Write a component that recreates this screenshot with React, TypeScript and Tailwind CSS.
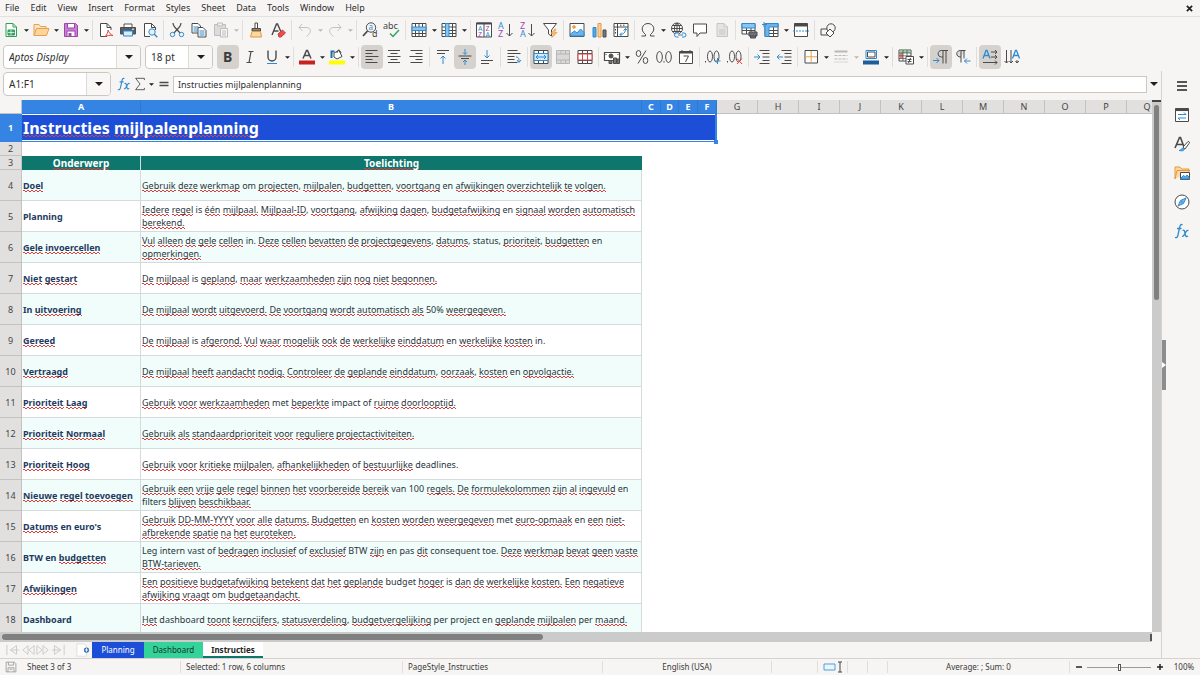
import React, { useState } from "react";

const menus = ["File", "Edit", "View", "Insert", "Format", "Styles", "Sheet", "Data", "Tools", "Window", "Help"];

const columns = [
  { name: "A", width: "w-[119px]", selected: true },
  { name: "B", width: "w-[501px]", selected: true },
  { name: "C", width: "w-[19px]", selected: true },
  { name: "D", width: "w-[18px]", selected: true },
  { name: "E", width: "w-[19px]", selected: true },
  { name: "F", width: "w-[19px]", selected: true },
  ...["G", "H", "I", "J", "K", "L", "M", "N", "O", "P", "Q"].map((name) => ({
    name,
    width: "w-[41px]",
    selected: false,
  })),
];

const rows = [
  ["Doel", "Gebruik deze werkmap om projecten, mijlpalen, budgetten, voortgang en afwijkingen overzichtelijk te volgen."],
  ["Planning", "Iedere regel is één mijlpaal. Mijlpaal-ID, voortgang, afwijking dagen, budgetafwijking en signaal worden automatisch berekend."],
  ["Gele invoercellen", "Vul alleen de gele cellen in. Deze cellen bevatten de projectgegevens, datums, status, prioriteit, budgetten en opmerkingen."],
  ["Niet gestart", "De mijlpaal is gepland, maar werkzaamheden zijn nog niet begonnen."],
  ["In uitvoering", "De mijlpaal wordt uitgevoerd. De voortgang wordt automatisch als 50% weergegeven."],
  ["Gereed", "De mijlpaal is afgerond. Vul waar mogelijk ook de werkelijke einddatum en werkelijke kosten in."],
  ["Vertraagd", "De mijlpaal heeft aandacht nodig. Controleer de geplande einddatum, oorzaak, kosten en opvolgactie."],
  ["Prioriteit Laag", "Gebruik voor werkzaamheden met beperkte impact of ruime doorlooptijd."],
  ["Prioriteit Normaal", "Gebruik als standaardprioriteit voor reguliere projectactiviteiten."],
  ["Prioriteit Hoog", "Gebruik voor kritieke mijlpalen, afhankelijkheden of bestuurlijke deadlines."],
  ["Nieuwe regel toevoegen", "Gebruik een vrije gele regel binnen het voorbereide bereik van 100 regels. De formulekolommen zijn al ingevuld en filters blijven beschikbaar."],
  ["Datums en euro's", "Gebruik DD-MM-YYYY voor alle datums. Budgetten en kosten worden weergegeven met euro-opmaak en een niet-afbrekende spatie na het euroteken."],
  ["BTW en budgetten", "Leg intern vast of bedragen inclusief of exclusief BTW zijn en pas dit consequent toe. Deze werkmap bevat geen vaste BTW-tarieven."],
  ["Afwijkingen", "Een positieve budgetafwijking betekent dat het geplande budget hoger is dan de werkelijke kosten. Een negatieve afwijking vraagt om budgetaandacht."],
  ["Dashboard", "Het dashboard toont kerncijfers, statusverdeling, budgetvergelijking per project en geplande mijlpalen per maand."],
];

// words the (English) spell checker accepts
const known = new Set(
  "om en is in status met impact of deadlines van 100 50% filters leg intern vast btw pas consequent toe dashboard per project budget planning euro's".split(" ")
);

// two rows of red dashes, shifted by half a period, make the zigzag
const zigzag =
  "bg-[linear-gradient(90deg,#e03c3c_50%,transparent_50%),linear-gradient(90deg,transparent_50%,#e03c3c_50%)] bg-[length:4px_1px] bg-repeat-x";

const Spelled = ({ text, big }: { text: string; big?: boolean }) => (
  <>
    {text.split(" ").map((word, i) => {
      const comma = word.endsWith(",");
      const body = comma ? word.slice(0, -1) : word;
      const ok = known.has(body.replace(/\.$/, "").toLowerCase());
      return (
        <React.Fragment key={i}>
          {i > 0 && " "}
          {ok ? (
            body
          ) : (
            <span
              className={`${zigzag} ${
                big
                  ? "[background-position:0_calc(100%-3px),0_calc(100%-2px)]"
                  : "[background-position:0_calc(100%-1px),0_100%]"
              }`}
            >
              {body}
            </span>
          )}
          {comma && ","}
        </React.Fragment>
      );
    })}
  </>
);

const Svg = ({ children, size = "size-4" }: { children: React.ReactNode; size?: string }) => (
  <svg viewBox="0 0 16 16" className={`${size} shrink-0 overflow-visible`} fill="none" stroke="#4a4a4a" strokeWidth="1" aria-hidden="true">
    {children}
  </svg>
);

const blue = "#2f8bd0";

const icons: Record<string, React.ReactNode> = {
  new: (
    <>
      <path d="M3 1.500h7l3.500 3.500V14.500H3z" fill="#fff" stroke="#2f9e58" />
      <path d="M10 1.500v3.500h3.500" stroke="#2f9e58" />
      <path d="M5 8h6.500v5H5z" fill="#36a862" stroke="#2f9e58" />
      <path d="M5 10.500h6.500M8 8v5" stroke="#fff" strokeWidth=".7" />
    </>
  ),
  open: (
    <>
      <path d="M1 13.500V2.500h5l1.500 2H13v2" fill="#fbe3c4" stroke="#e8a04a" />
      <path d="M1 13.500 3.500 6.500H16l-2.500 7z" fill="#fcd49c" stroke="#e8a04a" />
    </>
  ),
  save: (
    <>
      <path d="M1.500 1.500h11l2 2v11h-13z" fill="#c77fd3" stroke="#9b48ab" />
      <path d="M4.500 1.500h7v4.500h-7z" fill="#fff" stroke="#9b48ab" />
      <path d="M4 9h8v5.500H4z" fill="#fff" stroke="#9b48ab" />
      <path d="M5.500 11h3v3.500h-3z" fill="#9b48ab" stroke="none" />
    </>
  ),
  pdf: (
    <>
      <path d="M9 14.500H2.500v-13h6.500l4 4V8" fill="#fff" />
      <path d="M9 1.500v4h4" />
      <path d="M7 14.500c2-1.500 3-4.500 3-6.500 1 3 3 5 5 5.500-3-.5-6 0-8 1z" stroke="#e04444" />
    </>
  ),
  print: (
    <>
      <path d="M4 5V2h8v3" stroke="#555" fill="#fff" />
      <path d="M.5 5.500h15v6.500H.500z" fill="#56606a" stroke="#4a4f55" />
      <path d="M3.500 9h9v5h-9z" fill="#d9ecfa" stroke={blue} />
      <path d="M12 7.200h2" stroke="#fff" />
    </>
  ),
  preview: (
    <>
      <path d="M8 14.500H2.500v-13h7l4 4V8" fill="#fff" />
      <path d="M9.500 1.500v4h4" />
      <circle cx="10" cy="10" r="3.200" fill="#e2f1fc" stroke={blue} />
      <path d="m12.300 12.300 3 3" stroke={blue} strokeWidth="1.400" />
    </>
  ),
  cut: (
    <>
      <path d="M4 1c0 4 4 6 7 10M12 1c0 4-4 6-7 10" strokeWidth="1.200" />
      <circle cx="3.500" cy="12.500" r="2.200" stroke={blue} />
      <circle cx="12.500" cy="12.500" r="2.200" stroke={blue} />
    </>
  ),
  copy: (
    <>
      <path d="M1 1.500h6l2.500 2.500v7H1z" fill="#fff" />
      <path d="M2.500 5h5M2.500 7h4M2.500 9h4" stroke={blue} />
      <path d="M7 5.500h5l3 3v6.500H7z" fill="#fff" />
      <path d="M8.500 9h5M8.500 11h5M8.500 13h5" stroke={blue} />
    </>
  ),
  paste: (
    <g stroke="#bdbdbd">
      <path d="M7 13.500H1.500v-11h11V6" fill="#dcdcdc" />
      <path d="M4.500 1h5v3h-5z" fill="#eee" />
      <path d="M7.500 6.500h7v8.500h-7zM9 9h4M9 11h4M9 13h4" fill="#f7f7f7" />
    </g>
  ),
  clone: (
    <>
      <path d="M7 1h2.500v5.500H7z" fill="#fff" />
      <path d="M4 6.500h8.500V9H4z" fill="#888" />
      <path d="M4 9.500h8.500l1 5.500h-11z" fill="#fbd7a4" stroke="#e9973a" />
    </>
  ),
  clear: (
    <>
      <path d="M2 13 6.500 2h1L11 10M3.500 9h5" strokeWidth="1.400" />
      <path d="m8 12 4.500-4 3 3L11 15H9z" fill="#e35050" stroke="#d23c3c" />
    </>
  ),
  undo: <path d="M5 2 2 5.500 5.500 9M2 5.500h7c6 0 5.500 5.500.500 9" stroke="#c2c2c2" />,
  redo: <path d="m11 2 3 3.500L10.500 9M14 5.500H7c-6 0-5.500 5.500-.5 9" stroke="#c2c2c2" />,
  find: (
    <>
      <circle cx="9" cy="5.500" r="4.700" />
      <path d="M5.500 9 1 14" strokeWidth="1.800" />
      <text x="6.500" y="8" fontSize="8" fill={blue} stroke="none">a</text>
      <text x="10" y="15" fontSize="9" fill="#444" stroke="none">d</text>
    </>
  ),
  spell: (
    <>
      <text x="-1" y="7" fontSize="9" fill="#444" stroke="none">abc</text>
      <path d="m6 11.500 3 3L15 8" stroke="#2fa55f" strokeWidth="1.500" />
    </>
  ),
  row: (
    <>
      <path d="M1 1.500h14v13H1zM1 11.500h14M4.500 1.500v13M8 1.500v13M11.500 1.500v13" fill="#fff" />
      <path d="M1 5h14v3.500H1z" fill="#8cc4f0" stroke={blue} />
    </>
  ),
  col: (
    <>
      <path d="M1 1.500h14v13H1zM1 5h14M1 8.500h14M1 11.500h14M11.500 1.500v13" fill="#fff" />
      <path d="M4.500 1.500H8v13H4.500z" fill="#8cc4f0" stroke={blue} />
    </>
  ),
  sort: (
    <>
      <path d="M.5 1h15v14H.500zM8 1v14" fill="#fff" />
      <path d="M.5 1.500h15" strokeWidth="2" />
      <g fontSize="7" stroke="none">
        <text x="2" y="8.500" fill={blue}>A</text>
        <text x="2" y="14.500" fill="#a344b5">Z</text>
        <text x="9.500" y="8.500" fill="#a344b5">Z</text>
        <text x="9.500" y="14.500" fill={blue}>A</text>
      </g>
    </>
  ),
  asc: (
    <>
      <g fontSize="9" stroke="none">
        <text x="0" y="7" fill={blue}>A</text>
        <text x="0" y="15" fill="#a344b5">Z</text>
      </g>
      <path d="M11.500 2v12M8.500 11l3 3 3-3" />
    </>
  ),
  desc: (
    <>
      <g fontSize="9" stroke="none">
        <text x="0" y="7" fill="#a344b5">Z</text>
        <text x="0" y="15" fill={blue}>A</text>
      </g>
      <path d="M11.500 2v12M8.500 11l3 3 3-3" />
    </>
  ),
  filter: (
    <>
      <path d="M1.500 1.500h13L9.500 8v6L6.500 12V8z" fill="#fff" />
      <path d="m13 7-4 4.500h2.500L10 15.500l5-5h-2.500l1.500-3.500z" fill="#fbc27c" stroke="#e9973a" strokeWidth=".7" />
    </>
  ),
  image: (
    <>
      <path d="M1 1.500h14v13H1z" fill="#fff" />
      <circle cx="5" cy="5" r="1.300" fill="#f5a94d" stroke="#e9973a" />
      <path d="m1.500 12 4-3 2.500 2 3.500-4 3.500 3.500V14H1.500z" fill="#6db3ea" stroke={blue} />
    </>
  ),
  chart: (
    <>
      <path d="M2 5.500h3v9.500H2z" fill="#58a6e0" stroke={blue} />
      <path d="M7 1.500h3V15H7z" fill="#fbd09a" stroke="#e9973a" />
      <path d="M12 8h3v7h-3z" fill="#777" />
    </>
  ),
  pivot: (
    <>
      <path d="M1 1.500h14v13H1zM1 5h14M4.500 1.500v13M7 3.200h1.500M10 3.200h1.500M2.500 7v1.500M2.500 10v1.500" fill="#fff" />
      <path d="M12.500 6.500c0 4-2 6-5.500 6M10.500 8.500l2-2 2 2M9 10.500l-2 2 2 2" stroke={blue} />
    </>
  ),
  omega: <path d="M1.500 14h4v-1.500C-.5 8 2.500 1.500 8 1.500s8.500 6.500 2.500 11V14h4" />,
  link: (
    <>
      <circle cx="7" cy="6.500" r="5.500" fill="#fff" />
      <path d="M1.500 6.500h11M7 1v11M7 1c-3.500 3.500-3.500 7.500 0 11M7 1c3.500 3.500 3.500 7.500 0 11M2.500 3.500h9M2.500 9.500h9" />
      <path d="M8.500 11h-2a2 2 0 0 0 0 4h2M12 11h2a2 2 0 0 1 0 4h-2M8 13h5" stroke={blue} fill="#f6f5f4" />
    </>
  ),
  comment: <path d="M1.500 2h13v9H8l-3 3.500V11H1.500z" fill="#fff" />,
  note: <path d="M3 1.500h7l3.500 3.500v9.500H3zM10 1.500v3.500h3.500M5 8h6.500M5 10h6.500M5 12h6.500" stroke="#c6c6c6" fill="#e4e4e4" />,
  printArea: (
    <>
      <path d="M1 1.500h13V12H1zM1 8.500h13M5.500 1.500V12M10 1.500V12" fill="#fff" />
      <path d="M1 1.500h13V6H1z" fill="#8cc4f0" stroke={blue} />
      <path d="M8 10h8v4H8zM9.500 14v2h5v-2" fill="#6a7178" />
    </>
  ),
  freeze: (
    <>
      <path d="M2 1.500h13v13H2zM2 8.500h13M2 11.500h13M10.500 1.500v13" fill="#fff" />
      <path d="M2 1.500h13V5H6v9.500H2z" fill="#6db3ea" stroke={blue} />
      <path d="M1 0v5M-1 2.500h5" stroke={blue} />
    </>
  ),
  split: (
    <>
      <path d="M1.500 1.500h13v13h-13z" fill="#fff" />
      <path d="M1.500 3h13" strokeWidth="3" />
      <path d="M0 9h16" stroke={blue} strokeDasharray="2 1" />
    </>
  ),
  shapes: (
    <>
      <path d="M1 7h8v6H1z" />
      <circle cx="11" cy="6" r="4.200" fill="#f6f5f4" />
      <path d="m10 7 4 4-4 4-4-4z" fill="#fff" />
    </>
  ),
  bold: <text x="3" y="13" fontSize="14" fontWeight="700" fill="#3d3d3d" stroke="none">B</text>,
  italic: <path d="M6.500 2.500h5M4.500 13.500h5M9 2.500l-2 11" strokeWidth="1.200" />,
  underline: (
    <>
      <path d="M4 1.500V8a4 4 0 0 0 8 0V1.500" strokeWidth="1.400" />
      <path d="M3 14.500h10" stroke={blue} />
    </>
  ),
  color: (
    <>
      <path d="m4 9.500 3.500-8h1l3.500 8M5.500 6.500h5" strokeWidth="1.500" />
      <path d="M0 11.500h16v4H0z" fill="#c9211e" stroke="none" />
    </>
  ),
  fill: (
    <>
      <path d="m5 4 5-2.500 3 6L8 10 5 8z" fill="#fff" />
      <path d="M8 4c0-4 3-4 4 0" />
      <path d="M2.500 9V2.500h3" stroke="#1f6fb0" strokeWidth="2" />
      <path d="M0 11.500h16v4H0z" fill="#ffff00" stroke="none" />
    </>
  ),
  left: <path d="M1.500 1.500h12M1.500 4.500h7M1.500 7.500h13M1.500 10.500h7M1.500 13.500h12" />,
  center: <path d="M2 1.500h12M4.500 4.500h7M1.500 7.500h13M4.500 10.500h7M2 13.500h12" />,
  right: <path d="M2.500 1.500h12M7.500 4.500h7M1.500 7.500h13M7.500 10.500h7M2.500 13.500h12" />,
  top: (
    <>
      <path d="M2 1.500h12M2 4.500h8" />
      <path d="M8 15V7M5.500 9.500 8 7l2.500 2.500" stroke={blue} />
    </>
  ),
  middle: (
    <>
      <path d="M1.500 7h13M4 9.500h8" />
      <path d="M8 0v5M6 3.500 8 5.500l2-2M8 16v-4.500M6 13l2-2 2 2" stroke={blue} />
    </>
  ),
  bottom: (
    <>
      <path d="M2 11.500h12M2 14.500h8" />
      <path d="M8 1v8M5.500 6.500 8 9l2.500-2.500" stroke={blue} />
    </>
  ),
  wrap: (
    <>
      <path d="M1.500 1.500h10M1.500 4.500h13M1.500 7.500h7M1.500 10.500h7M1.500 13.500h10" />
      <path d="M10 8c3 0 3 2 3 5M11 11l2 2.500L15 11" stroke={blue} />
    </>
  ),
  merge: (
    <>
      <path d="M1 1.500h14v13H1zM1 4.500h14M1 11.500h14M5.500 1.500v3M10.500 1.500v3M5.500 11.500v3M10.500 11.500v3" fill="#fff" />
      <path d="M1 4.500h14v7H1z" fill="#d4e9fa" stroke={blue} />
      <path d="M3 8h10M5 6 3 8l2 2M11 6l2 2-2 2" stroke={blue} />
    </>
  ),
  mergeGrey: <path d="M1.500 1.500h13v13h-13zM1.500 5h13M1.500 11h13M6 1.500v3.500M10.500 1.500v3.500M6 11v3.500M10.500 11v3.500" stroke="#b5b5b5" fill="#d9d9d9" />,
  splitCells: (
    <>
      <path d="M1 1.500h14v13H1zM1 4.500h14M1 11.500h14M5.500 1.500v3M10.500 1.500v3M5.500 11.500v3M10.500 11.500v3" fill="#fff" />
      <path d="M1 5h14v6H1zM5.500 5v6M10.500 5v6" stroke="#dd4444" fill="#fff" />
    </>
  ),
  currency: (
    <>
      <path d="M.5 3.500h15v8H.500z" fill="#fff" strokeWidth="1.200" />
      <circle cx="7" cy="7" r="2" fill="#555" />
      <path d="M2 5v1M14 5v1M5 14.500v-3h3v3zM9.500 14.500V9h3v5.500zM13 14.500V10h2.500v4.500z" fill="#777" />
    </>
  ),
  percent: (
    <>
      <ellipse cx="4.500" cy="4.500" rx="2.300" ry="3" />
      <ellipse cx="11.500" cy="11.500" rx="2.300" ry="3" />
      <path d="m12 1.500-8 13" />
    </>
  ),
  number: (
    <>
      <ellipse cx="3.500" cy="8" rx="2.800" ry="5.500" />
      <ellipse cx="12.500" cy="8" rx="2.800" ry="5.500" />
      <path d="M8 12v1.500" />
    </>
  ),
  date: (
    <>
      <path d="M1.500 2.500h13v12h-13z" fill="#fff" />
      <path d="M1.500 3.500h13" strokeWidth="2" />
      <path d="M4 1v2M12 1v2M5.500 7h5l-3 6" />
    </>
  ),
  addDec: (
    <>
      <path d="M.5 12v1.500" />
      <ellipse cx="5" cy="7.500" rx="2.500" ry="5.500" />
      <ellipse cx="11.500" cy="7.500" rx="2.500" ry="5.500" />
      <path d="M12.500 9v6M9.500 12h6" stroke={blue} />
    </>
  ),
  delDec: (
    <>
      <path d="M.5 12v1.500" />
      <ellipse cx="5" cy="7.500" rx="2.500" ry="5.500" />
      <ellipse cx="11.500" cy="7.500" rx="2.500" ry="5.500" />
      <path d="m10 9.500 5 5.500m0-5.500L10 15" stroke="#e04444" />
    </>
  ),
  indent: (
    <>
      <path d="M5.500 1.500h10M8.500 4.500h7M8.500 8h7M8.500 11.500h7M5.500 14.500h10" />
      <path d="M0 8h6M3.500 5.500 6 8l-2.500 2.500" stroke={blue} />
    </>
  ),
  outdent: (
    <>
      <path d="M5.500 1.500h10M8.500 4.500h7M8.500 8h7M8.500 11.500h7M5.500 14.500h10" />
      <path d="M7 8H1M3.500 5.500 1 8l2.500 2.500" stroke={blue} />
    </>
  ),
  border: (
    <>
      <path d="M2 1.500h12.500v12.500H2z" fill="#fff" />
      <path d="M8.200 2v11.500M2.500 7.800h11.500" stroke="#e9a04a" />
    </>
  ),
  lines: (
    <g stroke="#b9b9b9">
      <path d="M1.500 2.500h13" strokeWidth="2" />
      <path d="M1.500 6.500h13M1.500 10h13" strokeDasharray="3 1" />
      <path d="M1.500 13h13" strokeDasharray="1 1" />
    </g>
  ),
  borderColor: (
    <>
      <path d="M3 1.500h10.500v8H3z" fill="#fff" stroke={blue} />
      <path d="M4.500 3h7.500v5H4.500z" />
      <path d="M0 11.500h16v4H0z" fill="#1f5d9a" stroke="none" />
    </>
  ),
  cond: (
    <>
      <path d="M1 1h12v11H1z" fill="#fff" />
      <path d="M1.500 1.500h11v2.500h-11z" fill="#8fd29c" stroke="none" />
      <path d="M1.500 4h3.500v5.500H1.500z" fill="#ee8080" stroke="none" />
      <path d="M5 1v11M9 1v11M1 4h12M1 6.800h12M1 9.500h12" strokeWidth=".7" />
      <path d="M8 7.500h7.500V15H8zM9.500 10.500h4M9.500 12.500h4M12.500 9l-2 5" fill="#fff" />
    </>
  ),
  ltr: (
    <>
      <path d="M10 1.500v13M13 1.500v13M15 1.500H8.500C4 1.500 4 8 8.500 8H10" />
      <path d="M0 11.500h6M3.500 9 6 11.500 3.500 14" stroke={blue} />
    </>
  ),
  rtl: (
    <>
      <path d="M6 1.500v12M9 1.500v8M10.500 1.500h-5c-5 0-5 6.500 0 6.500H6" fill="#ddd" />
      <path d="M15.500 12h-6M12 9.500 9.500 12l2.500 2.500" stroke={blue} />
    </>
  ),
  textH: (
    <>
      <path d="m1 9.500 3-8h1l3 8M2.500 6.500h4" stroke={blue} strokeWidth="1.300" />
      <path d="M9 3h6M13 1l2 2-2 2M9 8h6M13 6l2 2-2 2M1 13.500h14M13 11.500l2 2-2 2" />
    </>
  ),
  textV: (
    <>
      <path d="m8.500 9.500 3-8h1l3 8M10 6.500h4" stroke={blue} strokeWidth="1.300" />
      <path d="M2.500 1v13M.5 12l2 2 2-2M7 1v13M5.500 12 7 14l2-2M13 11v3M11.500 12l1.500 2 2-2" />
    </>
  ),
  props: (
    <>
      <path d="M1.500 1.500h13v13h-13z" fill="#fff" />
      <path d="M1.500 2.800h13" strokeWidth="2.500" />
      <path d="M4 7.500h8M10 5.500l2 2M4 11h8M6 13l-2-2" stroke={blue} />
    </>
  ),
  style: (
    <>
      <path d="m1 12 4.500-10.500h1L10 11M2.500 8.500h6" strokeWidth="1.600" />
      <path d="m9 11 5-5.500c1.500 0 2 1 1 2L11 13z" fill="#fff" />
      <path d="M5 14.500c3 0 2-3 5-2.500 1.500 2-1 3.500-5 2.500z" fill="#5aa9e6" stroke={blue} />
    </>
  ),
  gallery: (
    <>
      <path d="M1 14V2h5l1.500 2H15v3" fill="#fcd9a8" stroke="#e9973a" />
      <path d="M1 14 3 5.500h13" stroke="#e9973a" />
      <path d="M6.500 7.500h9v7h-9z" fill="#fff" />
      <path d="m7 13 2.500-2.500 2 1.500L13 10l2 2v2H7z" fill="#5aa9e6" stroke={blue} />
    </>
  ),
  navigator: (
    <>
      <circle cx="8" cy="8" r="7" fill="#fff" />
      <path d="m12 4-2.500 5.500L4 12l2.500-5.500z" fill="#7dbcf0" stroke={blue} />
      <circle cx="8" cy="8" r="1" fill="#fff" stroke={blue} />
    </>
  ),
  fx: (
    <g stroke={blue} strokeWidth="1.300">
      <path d="M8.500 1.800C6.500.8 6 2.500 5.500 5L4 12c-.5 2.500-1.500 3-3 2.300M3 5.500h4.500" />
      <path d="M8.500 7.500c2-1 2 .5 2.500 3s1 4 3 2.500M14.500 7.500c-2-1-2.500 1.500-3.500 3s-1.500 3.500-3 2.800" />
    </g>
  ),
  sum: <path d="M13 3.500v-2H3l5 6.500-5 6.500h10v-2" />,
  floppy: <path d="M1.500 1.500h11l2 2v11h-13zM4.500 1.500v4h7v-4M4 14.500V9h8v5.500M6 11h4" stroke="#909090" />,
};

type Item = { id: string; drop?: boolean; on?: boolean; off?: boolean };

const SEP: Item = { id: "sep" };

const standardBar: Item[] = [
  { id: "new", drop: true }, { id: "open", drop: true }, { id: "save", drop: true }, SEP,
  { id: "pdf" }, { id: "print" }, { id: "preview" }, SEP,
  { id: "cut" }, { id: "copy" }, { id: "paste", drop: true, off: true }, SEP,
  { id: "clone" }, { id: "clear" }, SEP,
  { id: "undo", drop: true, off: true }, { id: "redo", drop: true, off: true }, SEP,
  { id: "find" }, { id: "spell" }, SEP,
  { id: "row", drop: true }, { id: "col", drop: true }, SEP,
  { id: "sort" }, { id: "asc" }, { id: "desc" }, { id: "filter" }, SEP,
  { id: "image" }, { id: "chart" }, { id: "pivot" }, SEP,
  { id: "omega", drop: true }, { id: "link" }, { id: "comment" }, { id: "note", off: true }, SEP,
  { id: "printArea" }, { id: "freeze", drop: true }, { id: "split" }, SEP,
  { id: "shapes" },
];

const formatBar: Item[] = [
  { id: "bold", on: true }, { id: "italic" }, { id: "underline", drop: true }, SEP,
  { id: "color", drop: true }, { id: "fill", drop: true }, SEP,
  { id: "left", on: true }, { id: "center" }, { id: "right" }, SEP,
  { id: "top" }, { id: "middle", on: true }, { id: "bottom" }, SEP,
  { id: "wrap" }, SEP,
  { id: "merge", on: true }, { id: "mergeGrey", off: true }, { id: "splitCells" }, SEP,
  { id: "currency", drop: true }, { id: "percent" }, { id: "number" }, { id: "date" }, SEP,
  { id: "addDec" }, { id: "delDec" }, SEP,
  { id: "indent" }, { id: "outdent" }, SEP,
  { id: "border", drop: true }, { id: "lines", drop: true, off: true }, { id: "borderColor", drop: true }, SEP,
  { id: "cond", drop: true }, SEP,
  { id: "ltr", on: true }, { id: "rtl" }, SEP,
  { id: "textH", on: true }, { id: "textV" },
];

const Caret = ({ off, big }: { off?: boolean; big?: boolean }) => (
  <svg viewBox="0 0 8 4" className={big ? "w-2 h-1" : "w-[5px] h-[3px]"} fill={off ? "#b8b8b8" : "#1f1f1f"} aria-hidden="true">
    <path d="M0 0h8L4 4z" />
  </svg>
);

const Bar = ({ items }: { items: Item[] }) => (
  <div className="flex items-center" role="toolbar">
    {items.map((item, i) =>
      item.id === "sep" ? (
        <div key={i} className="w-[5px] h-5 flex justify-center shrink-0">
          <div className="w-px bg-[#e0dedb]"></div>
        </div>
      ) : (
        <React.Fragment key={i}>
          <button
            type="button"
            aria-label={item.id}
            className={`w-[22px] h-6 rounded flex items-center justify-center shrink-0 ${item.on ? "bg-[#d5d1cd]" : ""}`}
          >
            <Svg>{icons[item.id]}</Svg>
          </button>
          {item.drop && (
            <button type="button" aria-label={item.id + " options"} className="w-2 h-6 flex items-center justify-center shrink-0">
              <Caret off={item.off} />
            </button>
          )}
        </React.Fragment>
      )
    )}
  </div>
);

const Combo = ({ label, value, className }: { label: string; value: string; className: string }) => {
  const [text, setText] = useState(value);
  return (
    <div className={`flex h-6 rounded border border-[#cdc7c2] bg-white overflow-hidden shrink-0 ${className}`}>
      <input
        aria-label={label}
        value={text}
        onChange={(e) => setText(e.target.value)}
        className="flex-1 min-w-0 px-[5px] outline-none"
      />
      <button type="button" aria-label={label + " list"} className="w-6 border-l border-[#dedad7] bg-[#f8f7f6] flex items-center justify-center">
        <Caret big />
      </button>
    </div>
  );
};

const RowHead = ({ n, selected }: { n: number; selected?: boolean }) => (
  <th
    scope="row"
    className={`border-r border-b text-center p-0 text-[9px] ${
      selected ? "bg-[#3584e4] border-[#3584e4] text-white font-bold" : "bg-[#e2e0de] border-[#c4c2c0] font-normal text-[#444]"
    }`}
  >
    {n}
  </th>
);

const Sheet = () => (
  <div className="flex-1 min-w-0 overflow-hidden bg-white">
    <table className="table-fixed border-separate border-spacing-0 w-[1168px] text-[9px] leading-[13px] text-[#2b3640]">
      <colgroup>
        <col className="w-[22px]" />
        {columns.map((c) => (
          <col key={c.name} className={c.width} />
        ))}
      </colgroup>
      <thead>
        <tr className="h-[14px]">
          <td className="bg-[#f6f5f4] border-r border-b border-[#c4c2c0] p-0"></td>
          {columns.map((c) => (
            <th
              key={c.name}
              scope="col"
              className={`p-0 border-r border-b ${
                c.selected ? "bg-[#3584e4] border-[#2f78d0] text-white font-bold" : "bg-[#e2e0de] border-[#c4c2c0] text-[#444] font-normal"
              }`}
            >
              {c.name}
            </th>
          ))}
        </tr>
      </thead>
      <tbody>
        <tr className="h-7">
          <RowHead n={1} selected />
          <td colSpan={6} className="relative py-0 pl-px pr-0 bg-[#1d4ed8] border-b border-r-2 border-[#3584e4] text-white text-[16px] leading-6 font-bold whitespace-nowrap shadow-[inset_0_-1px_0_#fff,inset_0_1px_0_#fff]">
            <Spelled text="Instructies mijlpalenplanning" big />
            <span className="absolute -right-[3px] -bottom-[3px] size-1 bg-[#3584e4]"></span>
          </td>
        </tr>
        <tr className="h-[14px]">
          <RowHead n={2} />
        </tr>
        <tr className="h-[14px] text-white font-bold text-[10px]">
          <RowHead n={3} />
          <td className="p-0 bg-[#0f766e] border-r border-[#d5dadd] text-center">
            <Spelled text="Onderwerp" />
          </td>
          <td className="p-0 bg-[#0f766e] text-center">
            <Spelled text="Toelichting" />
          </td>
        </tr>
        {rows.map(([topic, note], i) => (
          <tr key={topic} className="h-[31px]">
            <RowHead n={i + 4} />
            <td className={`py-0 pl-px pr-0 border-r border-b border-[#d5dadd] font-bold text-[#1e3a5f] whitespace-nowrap ${i % 2 === 0 ? "bg-[#f0fdfa]" : ""}`}>
              <Spelled text={topic} />
            </td>
            <td className={`py-0 pl-px pr-0 border-r border-b border-[#d5dadd] ${i % 2 === 0 ? "bg-[#f0fdfa]" : ""}`}>
              <Spelled text={note} />
            </td>
          </tr>
        ))}
      </tbody>
    </table>
  </div>
);

const SheetTabs = () => (
  <div className="flex items-stretch h-4 shrink-0 text-[9px] leading-4">
    <div className="flex items-center pl-[5px] w-[74px]">
      {["M1 2v12M12 3 5 8l7 5zM5 8h10", "M8 3 2 8l6 5zM15 3 9 8l6 5z", "M1 3l6 5-6 5zM8 3l6 5-6 5z", "M15 2v12M4 3l7 5-7 5zM1 8h10"].map((d) => (
        <button key={d} type="button" aria-label="Scroll sheets" className="w-[15px] flex justify-center">
          <svg viewBox="0 0 16 16" className="size-[14px]" fill="none" stroke="#c9c7c5" aria-hidden="true">
            <path d={d} />
          </svg>
        </button>
      ))}
    </div>
    <button type="button" aria-label="Add sheet" className="w-[18px] flex items-center justify-center">
      <svg viewBox="0 0 16 16" className="size-[14px]" aria-hidden="true">
        <path d="M1 1h8l3 3v11H1z" fill="#fff" stroke="#dcdcdc" />
        <circle cx="12" cy="8" r="3" fill="#2f6fb0" />
        <path d="M12 6v4M10 8h4" stroke="#fff" />
      </svg>
    </button>
    <button type="button" className="w-[52px] bg-[#1d4ed8] text-white text-[8px]">Planning</button>
    <button type="button" className="w-[59px] bg-[#34d399] text-[#17352b] text-[8px]">Dashboard</button>
    <button type="button" className="w-[60px] bg-white border-b-2 border-[#0f766e] text-[#222] font-bold text-[8px]">Instructies</button>
  </div>
);

const StatusBar = () => (
  <footer className="flex items-center h-[17px] border-t border-[#d5d2cf] text-[8px] text-[#3a3a3a] shrink-0">
    <div className="w-[22px] flex justify-center">
      <Svg size="size-3">{icons.floppy}</Svg>
    </div>
    <div className="w-[158px] pl-[5px]">Sheet 3 of 3</div>
    <div className="w-[222px] pl-[5px] border-l border-[#e0dedb]">Selected: 1 row, 6 columns</div>
    <div className="w-[200px] pl-[5px] border-l border-[#e0dedb]">PageStyle_Instructies</div>
    <div className="w-[169px] text-center border-l border-[#e0dedb]">English (USA)</div>
    <div className="w-[46px] border-l border-[#e0dedb] h-3"></div>
    <div className="w-[30px] border-l border-[#e0dedb] flex items-center justify-center">
      <svg viewBox="0 0 20 12" className="w-5 h-3" fill="none" aria-hidden="true">
        <path d="M1 3h11v6H1z" stroke="#4f9fd8" fill="#eaf5fd" />
        <path d="M15 1h4M15 11h4M17 1v10" stroke="#444" />
      </svg>
    </div>
    <div className="w-5 border-l border-[#e0dedb] h-3"></div>
    <div className="w-5 border-l border-[#e0dedb] h-3"></div>
    <div className="flex-1 text-center border-l border-[#e0dedb]">Average: ; Sum: 0</div>
    <div className="flex items-center gap-1 px-1 border-l border-[#e0dedb]">
      <button type="button" aria-label="Zoom out" className="w-[9px] h-3 flex items-center justify-center">
        <svg viewBox="0 0 8 8" className="size-2" stroke="#222" strokeWidth="1.500"><path d="M1 4h6" /></svg>
      </button>
      <input
        type="range"
        aria-label="Zoom"
        defaultValue={50}
        className="appearance-none w-16 h-px bg-[#9a9a9a] [&::-webkit-slider-thumb]:appearance-none [&::-webkit-slider-thumb]:w-[3px] [&::-webkit-slider-thumb]:h-[7px] [&::-webkit-slider-thumb]:bg-white [&::-webkit-slider-thumb]:border [&::-webkit-slider-thumb]:border-[#555]"
      />
      <button type="button" aria-label="Zoom in" className="w-[9px] h-3 flex items-center justify-center">
        <svg viewBox="0 0 8 8" className="size-2" stroke="#222" strokeWidth="1.500"><path d="M1 4h6M4 1v6" /></svg>
      </button>
    </div>
    <div className="w-8 text-center">100%</div>
  </footer>
);

const App = () => {
  const [formula, setFormula] = useState("Instructies mijlpalenplanning");
  return (
    <div className="h-screen flex flex-col overflow-hidden bg-[#f6f5f4] text-[10px] text-[#2e2e2e] font-['Noto_Sans','Open_Sans',sans-serif]">
      <header className="flex items-center h-[17px] border-b border-[#e3e1df] text-[9px] shrink-0">
        <nav className="flex flex-1 gap-[11px] pl-[5px]">
          {menus.map((m) => (
            <button key={m} type="button">{m}</button>
          ))}
        </nav>
        <button type="button" aria-label="Close document" className="w-[22px] flex justify-center">
          <svg viewBox="0 0 8 8" className="size-[7px]" stroke="#222" strokeWidth="2"><path d="m1 1 6 6M7 1 1 7" /></svg>
        </button>
      </header>
      <div className="flex items-center h-[26px] shrink-0">
        <Bar items={standardBar} />
      </div>
      <div className="flex items-center h-7 pl-[3px] shrink-0">
        <Combo label="Font name" value="Aptos Display" className="w-[138px] italic mr-1" />
        <Combo label="Font size" value="18 pt" className="w-[68px] mr-1" />
        <Bar items={formatBar} />
      </div>
      <div className="flex flex-1 min-h-0">
        <main className="flex flex-col flex-1 min-w-0">
          <div className="flex items-center h-[29px] pl-[3px] pb-[3px] shrink-0">
            <Combo label="Name box" value="A1:F1" className="w-[108px]" />
            <div className="flex items-center pl-1">
              <button type="button" aria-label="Function wizard" className="w-[18px] flex justify-center"><Svg size="size-[14px]">{icons.fx}</Svg></button>
              <button type="button" aria-label="Select function" className="w-[14px] flex justify-center"><Svg size="size-[14px]">{icons.sum}</Svg></button>
              <button type="button" aria-label="Function list" className="w-2 flex justify-center"><Caret /></button>
              <button type="button" aria-label="Formula" className="w-[18px] flex justify-center">
                <Svg size="size-3"><path d="M2 6h12M2 10h12" strokeWidth="1.800" /></Svg>
              </button>
            </div>
            <input
              aria-label="Formula input"
              value={formula}
              onChange={(e) => setFormula(e.target.value)}
              className="flex-1 min-w-0 h-[17px] border border-[#cdc7c2] bg-white px-1 text-[9px] outline-none"
            />
            <button type="button" aria-label="Expand formula bar" className="w-[14px] flex justify-center"><Caret big /></button>
          </div>
          <div className="flex flex-1 min-h-0">
            <Sheet />
            <div className="w-[9px] bg-[#cbcbcb] border-t-2 border-[#444] px-[2px] pt-[3px] shrink-0">
              <div className="h-[37%] rounded-full bg-[#808080]"></div>
            </div>
          </div>
          <div className="h-[10px] bg-[#cbcbcb] flex items-center justify-between pl-[2px] mr-[9px] shrink-0">
            <div className="w-[47%] h-[6px] rounded-full bg-[#808080]"></div>
            <div className="w-[2px] h-[7px] bg-[#555]"></div>
          </div>
          <SheetTabs />
        </main>
        <aside className="flex w-[39px] border-l border-[#d5d2cf] shrink-0">
          <div className="w-1 self-center h-[50px] bg-[#8d8d8d] flex items-center">
            <svg viewBox="0 0 4 6" className="w-1 h-[6px]" fill="#fff"><path d="M0 0l4 3-4 3z" /></svg>
          </div>
          <div className="flex flex-col items-center flex-1 pt-[2px] pr-[3px]">
            <button type="button" aria-label="Sidebar settings" className="h-[26px] flex items-center">
              <Svg><path d="M3 4h10M3 8h10M3 12h10" stroke="#222" strokeWidth="1.500" /></Svg>
            </button>
            <div className="flex flex-col pt-[1px]">
              {["props", "style", "gallery", "navigator", "fx"].map((id) => (
                <button key={id} type="button" aria-label={id} className="h-[29px] flex items-center">
                  <Svg>{icons[id]}</Svg>
                </button>
              ))}
            </div>
          </div>
        </aside>
      </div>
      <StatusBar />
    </div>
  );
};

export default App;
